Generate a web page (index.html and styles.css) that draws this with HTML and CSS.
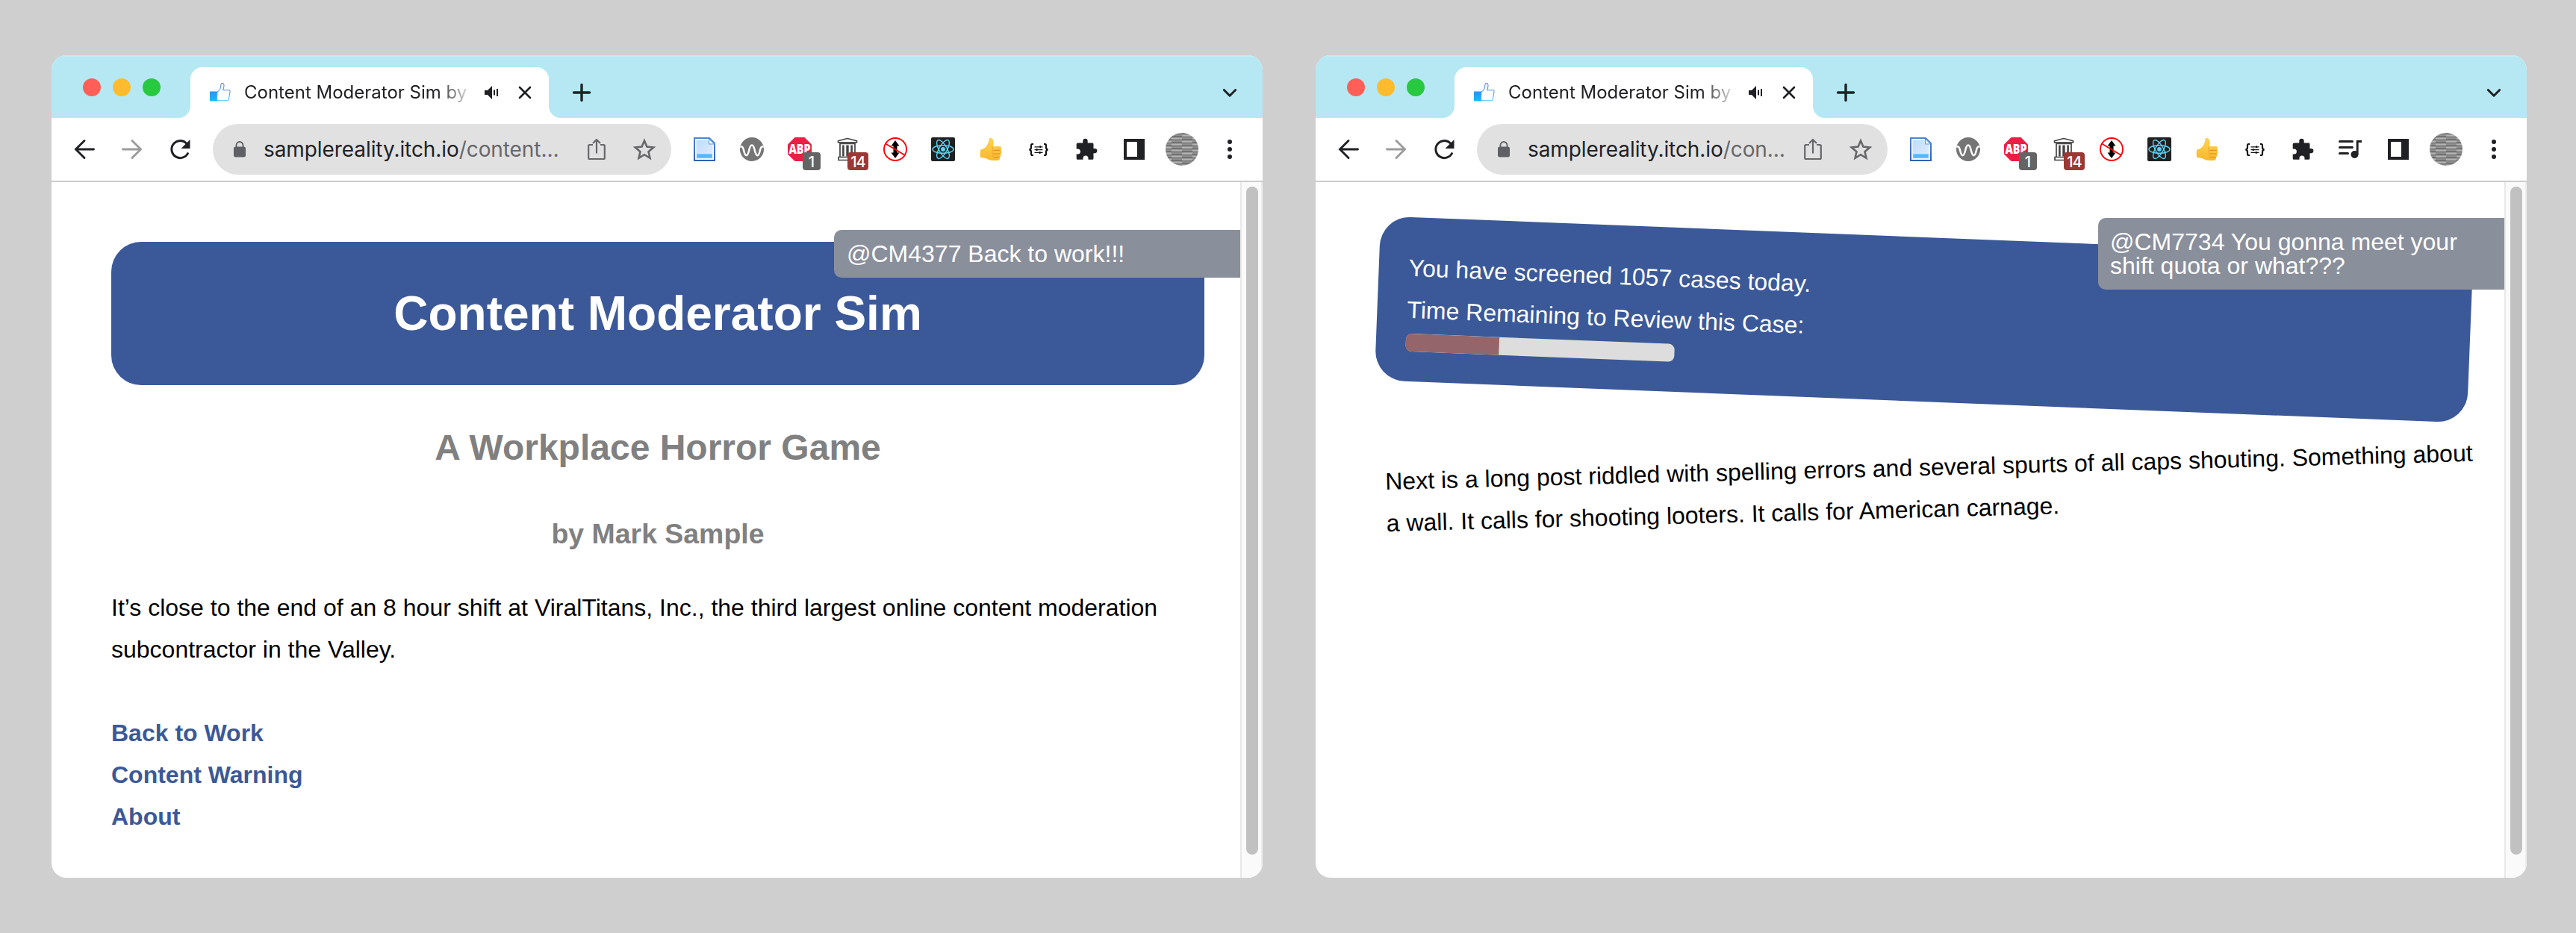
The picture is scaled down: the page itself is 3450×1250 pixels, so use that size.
FILE: index.html
```html
<!DOCTYPE html>
<html lang="en">
<head>
<meta charset="utf-8">
<title>Content Moderator Sim</title>
<link rel="stylesheet" href="styles.css">
</head>
<body>
<svg class="sprite" aria-hidden="true">
  <defs>
    <linearGradient id="like-fill" x1="0" y1="0" x2="0" y2="1"><stop offset="0" stop-color="#2b94f5"/><stop offset="1" stop-color="#16b9ff"/></linearGradient>
    <linearGradient id="like-line" x1="0" y1="0" x2="0" y2="1"><stop offset="0" stop-color="#5b7fe0"/><stop offset="1" stop-color="#4cc3fb"/></linearGradient>
    <linearGradient id="doc-line" x1="0" y1="0" x2="0" y2="1"><stop offset="0" stop-color="#4a87cf"/><stop offset="1" stop-color="#2d62b3"/></linearGradient>
    <linearGradient id="doc-fill" x1="0" y1="0" x2="1" y2="1"><stop offset="0" stop-color="#bfdcfa"/><stop offset="1" stop-color="#e2ecff"/></linearGradient>
    <linearGradient id="thumb-fill" x1="0" y1="0" x2="0" y2="1"><stop offset="0" stop-color="#ffd451"/><stop offset="1" stop-color="#f9b72e"/></linearGradient>
    <clipPath id="round"><circle cx="22" cy="22" r="22"/></clipPath>
    <clipPath id="disc"><circle cx="16" cy="16" r="16"/></clipPath>
    <pattern id="strata" width="28" height="8" patternUnits="userSpaceOnUse" x="-6">
      <rect width="28" height="8" fill="#929292"/>
      <path d="M0 1h14M14 5h14" stroke="#686868" stroke-width="1.500"/>
      <path d="M0 3.500h14M14 7.500h14" stroke="#b5b5b5" stroke-width="1.500"/>
      <path d="M0 6h14M14 2h14" stroke="#7a7a7a"/>
    </pattern>
  </defs>
  <symbol id="i-like" viewBox="0 0 28 28">
    <rect x="0" y="12.500" width="10" height="13" fill="url(#like-fill)"/>
    <path d="M10 13c3-1.500 4.500-4 4.700-7.500.1-3 .6-4.200 2-4.200 2 0 2.800 2.500 2 5.500l-1 4h7.400c1.500 0 2.200 1 1.900 2.300l-1.700 10c-.3 1.300-1.200 1.700-2.300 1.700H13c-1.500 0-2.500-.3-3.500-1z" fill="#fff" stroke="url(#like-line)" stroke-width="1.100"/>
  </symbol>
  <symbol id="i-sound" viewBox="0 0 20 18">
    <path d="M0 6h4l6-6v18l-6-6H0z" fill="#202124"/><path d="M13 5.500v7M17 4v10" stroke="#202124" stroke-width="2" fill="none"/>
  </symbol>
  <symbol id="i-close" viewBox="0 0 18 18"><path d="M2 2l14 14M16 2L2 16" stroke="#202124" stroke-width="2.600" stroke-linecap="round"/></symbol>
  <symbol id="i-plus" viewBox="0 0 32 32"><path d="M16 5.500v21M5.500 16h21" stroke="#202124" stroke-width="3.400" stroke-linecap="round"/></symbol>
  <symbol id="i-chevron" viewBox="0 0 32 32"><path d="M8.300 12.500l7.700 7.700 7.700-7.700" fill="none" stroke="#202124" stroke-width="3" stroke-linecap="round" stroke-linejoin="round"/></symbol>
  <symbol id="i-back" viewBox="0 0 32 32"><path d="M28.500 16H5M16 4.500L4.500 16 16 27.500" fill="none" stroke="currentColor" stroke-width="2.900" stroke-linecap="round" stroke-linejoin="miter"/></symbol>
  <symbol id="i-reload" viewBox="0 0 32 32"><path d="M27 20.500A11.500 11.500 0 1 1 24 7.500l1.500 1.500" fill="none" stroke="#202124" stroke-width="3"/><path d="M29.500 3v12h-12z" fill="#202124"/></symbol>
  <symbol id="i-lock" viewBox="0 0 16 22"><path d="M3.500 9V5.500a4.500 4.500 0 0 1 9 0V9" fill="none" stroke="#5f6065" stroke-width="1.900"/><rect y="7.500" width="16" height="14" rx="2.500" fill="#5f6065"/></symbol>
  <symbol id="i-share" viewBox="0 0 32 32"><path d="M11 10H6.500Q5.200 10 5.200 11.500v16Q5.200 29 6.500 29h19q1.300 0 1.300-1.500v-16Q26.800 10 25.500 10H21M16 21.500V3.500M11 8l5-5 5 5" fill="none" stroke="#66676b" stroke-width="2.200" stroke-linejoin="round"/></symbol>
  <symbol id="i-star" viewBox="0 0 32 32"><path d="M16 4.500l3.400 8.100 8.800.8-6.700 5.800 2 8.600L16 23.200l-7.500 4.600 2-8.600-6.700-5.800 8.800-.8z" fill="none" stroke="#66676b" stroke-width="2.600"/></symbol>
  <symbol id="i-doc" viewBox="0 0 32 32">
    <path d="M3 1h20l7 7v23H3z" fill="#fff" stroke="url(#doc-line)" stroke-width="2"/>
    <path d="M5.500 3.500h16l1 5.500 5 1v18.500h-22z" fill="url(#doc-fill)"/><path d="M22.500 2v7h7z" fill="#f4f9ff" stroke="#5d94d6"/>
    <rect x="6.500" y="22.500" width="20" height="5" fill="#56b8fb" stroke="#7ec9ff"/>
  </symbol>
  <symbol id="i-wave" viewBox="0 0 32 32"><circle cx="16" cy="16" r="16" fill="#757575"/><path clip-path="url(#disc)" d="M-1 13c3.500-1.800 5.200 0 6 4 1.200 5.500 2 7.200 3.500 7.200s2.600-2.200 3.600-6.400c1-4.800 2-7.300 3.900-7.300s2.900 2.500 3.900 7.300c1 4.200 2.100 6.400 3.600 6.400s2.300-1.700 3.500-7.200c.8-4 2.500-5.800 6-4" fill="none" stroke="#fff" stroke-width="2.500"/></symbol>
  <symbol id="i-museum" viewBox="0 0 32 32"><path d="M3.500 6.800V4.800L16 1.500l12.500 3.300v2z" fill="#fff" stroke="#444" stroke-width="1.700" stroke-linejoin="round"/><path d="M5.500 8.500h21M6 8v18M26 8v18M4 26.500h24v4H4z" fill="#fff" stroke="#444" stroke-width="1.700"/><path d="M10.400 10.500v15M21.600 10.500v15" stroke="#444" stroke-width="2.600"/><path d="M16 10.500v15" stroke="#444" stroke-width="3.400"/></symbol>
  <symbol id="i-noscroll" viewBox="0 0 32 32"><path d="M16 4l5.500 7.500H18.500v9h3L16 28l-5.500-7.500h3v-9h-3z" fill="#000"/><circle cx="16" cy="16" r="15" fill="none" stroke="#f00" stroke-width="1.900"/><path d="M3 8.500l26 15.500" stroke="#f00" stroke-width="1.900"/></symbol>
  <symbol id="i-react" viewBox="0 0 32 32"><rect width="32" height="32" rx="2" fill="#202020"/><g fill="none" stroke="#5fd3f3" stroke-width="1.400"><ellipse cx="16" cy="16" rx="14" ry="5.300"/><ellipse cx="16" cy="16" rx="14" ry="5.300" transform="rotate(60 16 16)"/><ellipse cx="16" cy="16" rx="14" ry="5.300" transform="rotate(120 16 16)"/></g><circle cx="16" cy="16" r="2.900" fill="#5fd3f3"/></symbol>
  <symbol id="i-thumb" viewBox="0 0 32 32">
    <path d="M2.200 16.500C6.500 16 9 13.500 11 10.500c1.500-2.500 2-4.500 2.300-7.500C13.500 1.300 14.500.6 15.800.8c2.600.4 3.900 2.700 3.900 5.700 0 2.300-.3 4-.8 5.800l8.200-.2c2 0 3.100 1.200 3.100 2.900 0 1-.4 1.700-1 2.200.9.600 1.400 1.400 1.300 2.500-.1 1.200-.6 2-1.500 2.500.5.700.7 1.400.5 2.300-.2 1.100-.8 1.800-1.800 2.200.3.700.4 1.400.1 2.200-.6 1.600-2 2.200-4.800 2.200-5 0-9-.3-12.300-2.300C8.500 27.700 5.500 27 2.200 27 1.500 23.500 1.500 20 2.200 16.500z" fill="url(#thumb-fill)"/>
    <path d="M19.500 17.300h9.500M20 22h8.800M19.500 26.500h7.800" stroke="#d88d18" stroke-width="1" fill="none"/><path d="M20 12.300c-2.300 1-2.800 3-1.200 5-1.200 1.500-1.200 3.200.5 4.700-1.200 1.300-.9 3.200.6 4.500" stroke="#e7a126" stroke-width=".9" fill="none"/>
  </symbol>
  <symbol id="i-braces" viewBox="0 0 32 32"><g fill="none" stroke="#111"><path d="M9 9H7.500Q6 9 6 11v2.500Q6 16 3.500 16.500 6 17 6 19.500V22q0 2 1.500 2H9M23 9h1.500Q26 9 26 11v2.500q0 2.500 2.500 3Q26 17 26 19.500V22q0 2-1.500 2H23" stroke-width="2.200"/><path d="M10.500 12.800h11M10.500 16.600h11M10.500 20.400h11" stroke-width="1.300"/><path d="M18.200 11.300v3M13.700 15.100v3M17.700 18.900v3" stroke-width="1.700"/></g></symbol>
  <symbol id="i-puzzle" viewBox="0 0 32 32"><path d="M5 7.500h6.300V5a3.200 3.200 0 0 1 6.400 0v2.500H24q1.500 0 1.500 1.500v6h1.800a3.100 3.100 0 0 1 0 6.200h-1.800v7q0 1.500-1.500 1.500h-5.500v-1.800a3.200 3.200 0 0 0-7 0v1.800H4.200q-1.500 0-1.500-1.500v-5.700h1.700a3.500 3.500 0 0 0 0-7H2.700V9Q2.700 7.500 5 7.500z" fill="#202124"/></symbol>
  <symbol id="i-queue" viewBox="0 0 32 32"><path d="M1.500 5.500h17M1.500 13.500h17M1.500 21.500h11" stroke="#202124" stroke-width="3" stroke-linecap="round"/><circle cx="21.500" cy="23" r="5" fill="#202124"/><path d="M25.200 23V5.500H31" fill="none" stroke="#202124" stroke-width="2.900"/></symbol>
  <symbol id="i-panel" viewBox="0 0 32 32"><path fill-rule="evenodd" d="M2 2h28v28H2zM6 6v20h14V6z" fill="#202124"/></symbol>
  <symbol id="i-avatar" viewBox="0 0 44 44"><rect width="44" height="44" fill="url(#strata)" clip-path="url(#round)"/></symbol>
  <symbol id="i-dots" viewBox="0 0 32 32"><g fill="#202124"><circle cx="16" cy="6" r="3"/><circle cx="16" cy="16" r="3"/><circle cx="16" cy="26" r="3"/></g></symbol>
</svg>

<main class="desktop">
  <section class="window">
    <header class="tabstrip">
      <div class="lights"><span class="light close"></span><span class="light minimize"></span><span class="light zoom"></span></div>
      <div class="tab">
        <svg class="favicon"><use href="#i-like"/></svg>
        <span class="tab-title">Content Moderator Sim by</span>
        <svg class="sound"><use href="#i-sound"/></svg>
        <svg class="tab-close"><use href="#i-close"/></svg>
      </div>
      <svg class="icon new-tab"><use href="#i-plus"/></svg>
      <svg class="icon tab-search"><use href="#i-chevron"/></svg>
    </header>
    <nav class="toolbar">
      <svg class="icon"><use href="#i-back"/></svg>
      <svg class="icon forward"><use href="#i-back"/></svg>
      <svg class="icon"><use href="#i-reload"/></svg>
      <div class="address">
        <svg class="lock"><use href="#i-lock"/></svg>
        <span class="url">samplereality.itch.io<span class="path">/content…</span></span>
        <svg class="icon"><use href="#i-share"/></svg>
        <svg class="icon"><use href="#i-star"/></svg>
      </div>
      <svg class="icon"><use href="#i-doc"/></svg>
      <svg class="icon"><use href="#i-wave"/></svg>
      <div class="extension"><svg class="icon" viewBox="0 0 32 32"><path d="M9.500 0h13L32 9.500v13L22.500 32h-13L0 22.500v-13z" fill="#ed1e45"/><text x="16" y="22.300" class="abp-text" textLength="29" lengthAdjust="spacingAndGlyphs">ABP</text></svg><span class="badge">1</span></div>
      <div class="extension"><svg class="icon"><use href="#i-museum"/></svg><span class="badge red">14</span></div>
      <svg class="icon"><use href="#i-noscroll"/></svg>
      <svg class="icon"><use href="#i-react"/></svg>
      <svg class="icon"><use href="#i-thumb"/></svg>
      <svg class="icon"><use href="#i-braces"/></svg>
      <svg class="icon"><use href="#i-puzzle"/></svg>
      <svg class="icon"><use href="#i-panel"/></svg>
      <svg class="avatar"><use href="#i-avatar"/></svg>
      <svg class="icon"><use href="#i-dots"/></svg>
    </nav>
    <div class="viewport">
      <article class="page">
        <div class="banner title-banner"><h1>Content Moderator Sim</h1></div>
        <h2>A Workplace Horror Game</h2>
        <h3>by Mark Sample</h3>
        <p>It’s close to the end of an 8 hour shift at ViralTitans, Inc., the third largest online content moderation subcontractor in the Valley.</p>
        <ul class="choices">
          <li><a>Back to Work</a></li>
          <li><a>Content Warning</a></li>
          <li><a>About</a></li>
        </ul>
        <aside class="notice first">@CM4377 Back to work!!!</aside>
      </article>
      <div class="scrollbar"><div class="thumb"></div></div>
    </div>
  </section>

  <section class="window">
    <header class="tabstrip">
      <div class="lights"><span class="light close"></span><span class="light minimize"></span><span class="light zoom"></span></div>
      <div class="tab">
        <svg class="favicon"><use href="#i-like"/></svg>
        <span class="tab-title">Content Moderator Sim by</span>
        <svg class="sound"><use href="#i-sound"/></svg>
        <svg class="tab-close"><use href="#i-close"/></svg>
      </div>
      <svg class="icon new-tab"><use href="#i-plus"/></svg>
      <svg class="icon tab-search"><use href="#i-chevron"/></svg>
    </header>
    <nav class="toolbar">
      <svg class="icon"><use href="#i-back"/></svg>
      <svg class="icon forward"><use href="#i-back"/></svg>
      <svg class="icon"><use href="#i-reload"/></svg>
      <div class="address">
        <svg class="lock"><use href="#i-lock"/></svg>
        <span class="url">samplereality.itch.io<span class="path">/con…</span></span>
        <svg class="icon"><use href="#i-share"/></svg>
        <svg class="icon"><use href="#i-star"/></svg>
      </div>
      <svg class="icon"><use href="#i-doc"/></svg>
      <svg class="icon"><use href="#i-wave"/></svg>
      <div class="extension"><svg class="icon" viewBox="0 0 32 32"><path d="M9.500 0h13L32 9.500v13L22.500 32h-13L0 22.500v-13z" fill="#ed1e45"/><text x="16" y="22.300" class="abp-text" textLength="29" lengthAdjust="spacingAndGlyphs">ABP</text></svg><span class="badge">1</span></div>
      <div class="extension"><svg class="icon"><use href="#i-museum"/></svg><span class="badge red">14</span></div>
      <svg class="icon"><use href="#i-noscroll"/></svg>
      <svg class="icon"><use href="#i-react"/></svg>
      <svg class="icon"><use href="#i-thumb"/></svg>
      <svg class="icon"><use href="#i-braces"/></svg>
      <svg class="icon"><use href="#i-puzzle"/></svg>
      <svg class="icon"><use href="#i-queue"/></svg>
      <svg class="icon"><use href="#i-panel"/></svg>
      <svg class="avatar"><use href="#i-avatar"/></svg>
      <svg class="icon"><use href="#i-dots"/></svg>
    </nav>
    <div class="viewport">
      <article class="page">
        <div class="banner status-banner">
          <div>You have screened 1057 cases today.</div>
          <div>Time Remaining to Review this Case:</div>
          <div class="timer"><div class="timer-fill" style="width: 34.8%"></div></div>
        </div>
        <p class="case">Next is a long post riddled with spelling errors and several spurts of all caps shouting. Something about a wall. It calls for shooting looters. It calls for American carnage.</p>
        <aside class="notice second">@CM7734 You gonna meet your shift quota or what???</aside>
      </article>
      <div class="scrollbar"><div class="thumb"></div></div>
    </div>
  </section>
</main>
</body>
</html>
```

FILE: styles.css
```css
* { box-sizing: border-box; }
body { margin: 0; background: #cfcfcf; }
.sprite { position: absolute; width: 0; height: 0; }
svg { flex: none; display: block; }

.desktop { display: flex; gap: 71px; height: 1250px; padding: 74px 0 74px 69px; }
.window { display: flex; flex-direction: column; width: 1622px; height: 1102px; border-radius: 20px; overflow: hidden; background: #fff; }

/* Tab strip */
.tabstrip { display: flex; align-items: center; height: 84px; padding: 14px 28px 0 42px; background: #b5e8f3; border-top: 2px solid #c3ecf5; font-family: Inter, "Liberation Sans", sans-serif; }
.lights { display: flex; gap: 16px; align-self: flex-start; margin-top: 15px; }
.light { width: 24px; height: 24px; border-radius: 50%; }
.close { background: #ff5f57; }
.minimize { background: #febb2e; }
.zoom { background: #28c840; }
.tab { position: relative; display: flex; align-items: center; width: 480px; height: 68px; margin-left: 40px; padding: 0 23px 0 26px; border-radius: 16px 16px 0 0; background: #fff; }
.tab::before, .tab::after { content: ""; position: absolute; bottom: 0; width: 16px; height: 16px; }
.tab::before { left: -16px; background: radial-gradient(circle at 0 0, transparent 15.5px, #fff 16.5px); }
.tab::after { right: -16px; background: radial-gradient(circle at 100% 0, transparent 15.5px, #fff 16.5px); }
.favicon { width: 28px; height: 28px; }
.tab-title { width: 309px; margin: 0 13px 0 18px; white-space: nowrap; color: #202124; font-size: 24px; line-height: 32px; -webkit-mask-image: linear-gradient(90deg, #000 258px, transparent 308px); mask-image: linear-gradient(90deg, #000 258px, transparent 308px); }
.sound { width: 20px; height: 18px; }
.tab-close { width: 18px; height: 18px; margin-left: auto; }
.icon { width: 32px; height: 32px; }
.new-tab { margin-left: 28px; }
.tab-search { margin-left: auto; }

/* Toolbar */
.toolbar { display: flex; align-items: center; gap: 32px; height: 86px; padding: 0 28px; border-bottom: 2px solid #ccc; background: #fff; color: #202124; font-family: Inter, "Liberation Sans", sans-serif; }
.forward { color: #9c9c9c; transform: scaleX(-1); }
.address { display: flex; flex: 1; align-items: center; height: 68px; margin: 0 -4px 0 -4px; padding: 0 20px 0 28px; border-radius: 34px; background: #e1e1e1; }
.lock { width: 16px; height: 22px; }
.url { flex: 1; margin-left: 24px; white-space: nowrap; font-size: 28px; letter-spacing: -.08px; }
.path { color: #66676b; }
.address .icon + .icon { margin-left: 32px; }
.extension { position: relative; }
.badge { position: absolute; top: 20px; left: 20px; width: 24px; height: 24px; border-radius: 4px; background: #646464; color: #fff; font: 500 20px/26px Inter, sans-serif; text-align: center; }
.badge.red { left: 16px; width: 28px; background: #9a3835; letter-spacing: -1px; }
.abp-text { fill: #fff; font: 800 17.5px "Open Sans", sans-serif; text-anchor: middle; }
.avatar { width: 44px; height: 44px; margin: 0 -6px; }

/* Page content */
.viewport { display: flex; flex: 1; min-height: 0; }
.page { position: relative; flex: 1; padding: 80px 48px 0 80px; overflow: hidden; color: #000; font: 32px/56px "Liberation Sans", Arial, sans-serif; }
.banner { border-radius: 40px; background: #3b5998; color: #fff; }
.title-banner { display: flex; align-items: center; justify-content: center; height: 192px; }
h1, h2, h3, p { margin: 0; }
h1 { font-size: 64px; line-height: 112px; }
h2, h3 { color: #808080; text-align: center; }
h2 { margin-top: 42px; font-size: 48px; line-height: 84px; }
h3 { margin: 40px 0 38px; font-size: 37.44px; line-height: 66px; }
.choices { margin: 56px 0 0; padding: 0; list-style: none; color: #3b5998; font-weight: bold; }
.notice { position: absolute; right: 0; width: 544px; padding: 16px 32px 16px 16px; border-radius: 10px 0 0 10px; background: #8a8f9c; color: #fff; line-height: 32px; }
.first { top: 64px; padding-left: 17px; }
.second { top: 48px; }
.status-banner { height: 220px; padding: 40px; transform: translate(2.5px, -6px) rotate(2.25deg); }
.timer { width: 360px; height: 24px; margin-top: 4px; border-radius: 8px; overflow: hidden; background: #ddd; }
.timer-fill { height: 100%; background: #94666b; }
.case { margin-top: 73px; transform: translateX(12.5px) rotate(-1.5deg); transform-origin: 0 0; }
.scrollbar { width: 30px; padding: 6px 0 0 6px; border-left: 2px solid #e8e8e8; border-right: 2px solid #ededed; background: #fafafa; }
.thumb { width: 16px; height: 895px; border-radius: 8px; background: #c1c1c1; }
```
